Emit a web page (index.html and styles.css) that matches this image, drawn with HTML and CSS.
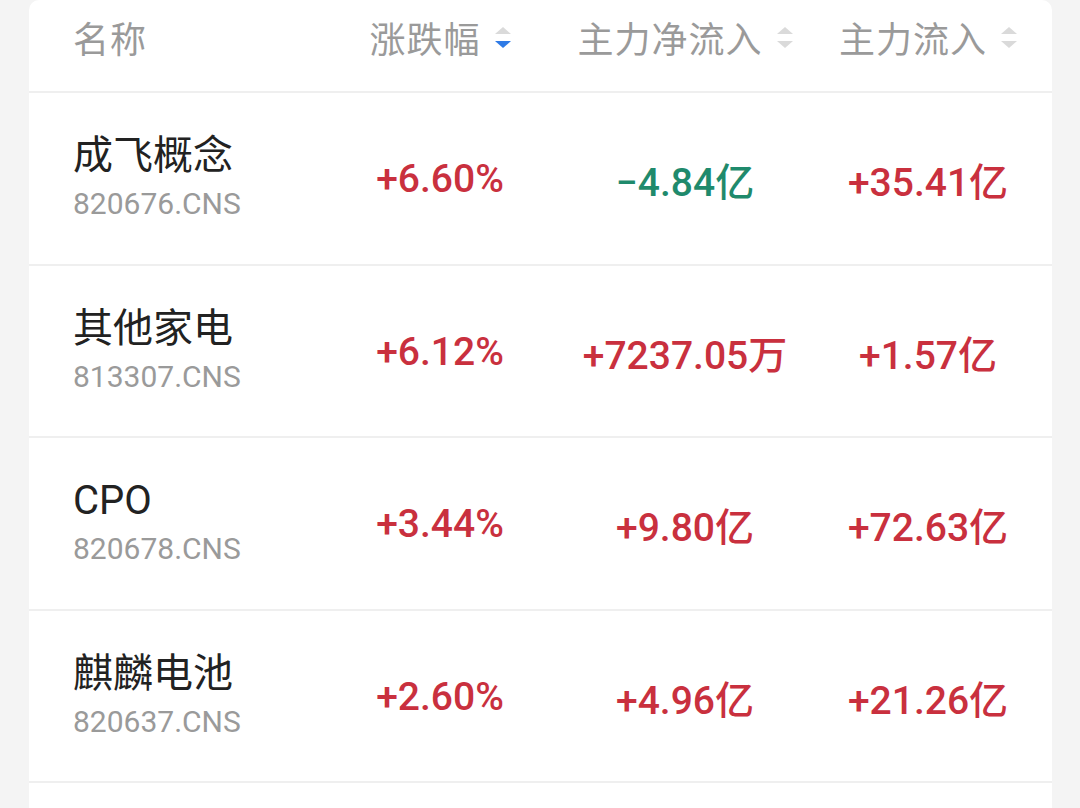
FILE: index.html
```html
<!DOCTYPE html>
<html lang="zh">
<head>
<meta charset="utf-8">
<link rel="stylesheet" href="styles.css">
</head>
<body>
<div class="card">
  <div class="row head">
    <div class="cell name-col">名称</div>
    <div class="cell num-col">涨跌幅<span class="sort"><i class="up"></i><i class="down active"></i></span></div>
    <div class="cell num-col">主力净流入<span class="sort"><i class="up"></i><i class="down"></i></span></div>
    <div class="cell num-col">主力流入<span class="sort"><i class="up"></i><i class="down"></i></span></div>
  </div>
  <div class="row item">
    <div class="cell name-col"><div class="name">成飞概念</div><div class="code">820676.CNS</div></div>
    <div class="cell num-col val red">+6.60%</div>
    <div class="cell num-col val green">−4.84亿</div>
    <div class="cell num-col val red">+35.41亿</div>
  </div>
  <div class="row item">
    <div class="cell name-col"><div class="name">其他家电</div><div class="code">813307.CNS</div></div>
    <div class="cell num-col val red">+6.12%</div>
    <div class="cell num-col val red">+7237.05万</div>
    <div class="cell num-col val red">+1.57亿</div>
  </div>
  <div class="row item">
    <div class="cell name-col"><div class="name">CPO</div><div class="code">820678.CNS</div></div>
    <div class="cell num-col val red">+3.44%</div>
    <div class="cell num-col val red">+9.80亿</div>
    <div class="cell num-col val red">+72.63亿</div>
  </div>
  <div class="row item">
    <div class="cell name-col"><div class="name">麒麟电池</div><div class="code">820637.CNS</div></div>
    <div class="cell num-col val red">+2.60%</div>
    <div class="cell num-col val red">+4.96亿</div>
    <div class="cell num-col val red">+21.26亿</div>
  </div>
</div>
</body>
</html>
```

FILE: styles.css
```css
html, body {
  margin: 0;
  padding: 0;
  background: #f4f4f4;
  height: 808px;
  overflow: hidden;
  font-family: Roboto, "Noto Sans CJK SC", sans-serif;
}

.card {
  margin-left: 29px;
  width: 1023px;
  background: #ffffff;
  border-radius: 10px 10px 0 0;
  height: 808px;
  overflow: hidden;
}

.row {
  display: grid;
  grid-template-columns: 291px 240px 250px 236px;
  align-items: center;
  border-bottom: 2px solid #efefef;
}

.head {
  height: 91px;
}

.item {
  height: 170.5px;
}

.cell {
  display: flex;
  align-items: center;
}

.name-col {
  padding-left: 44px;
  flex-direction: column;
  align-items: flex-start;
  justify-content: center;
}

.item .name-col {
  padding-top: 4px;
}

.head .name-col {
  flex-direction: row;
  justify-content: flex-start;
}

.num-col {
  justify-content: center;
}

.head .cell {
  font-size: 36px;
  color: #9a9a9a;
  font-family: "Noto Sans CJK SC", sans-serif;
  letter-spacing: 1px;
  padding-bottom: 17px;
}

.sort {
  display: inline-flex;
  flex-direction: column;
  gap: 7px;
  margin-left: 14px;
}

.sort i {
  display: block;
  width: 0;
  height: 0;
  border-left: 8px solid transparent;
  border-right: 8px solid transparent;
}

.sort .up {
  border-bottom: 7px solid #dadada;
}

.sort .down {
  border-top: 7px solid #dadada;
}

.sort .down.active {
  border-top-color: #2f7be6;
}

.name {
  font-size: 40px;
  line-height: 48px;
  color: #222222;
  font-family: Roboto, "Noto Sans CJK SC", sans-serif;
}

.code {
  font-size: 30px;
  line-height: 48px;
  color: #9a9a9a;
}

.val {
  font-size: 39px;
  font-weight: 500;
  margin-top: 2px;
}

.red {
  color: #c9303e;
}

.green {
  color: #1f8a6c;
}
```
